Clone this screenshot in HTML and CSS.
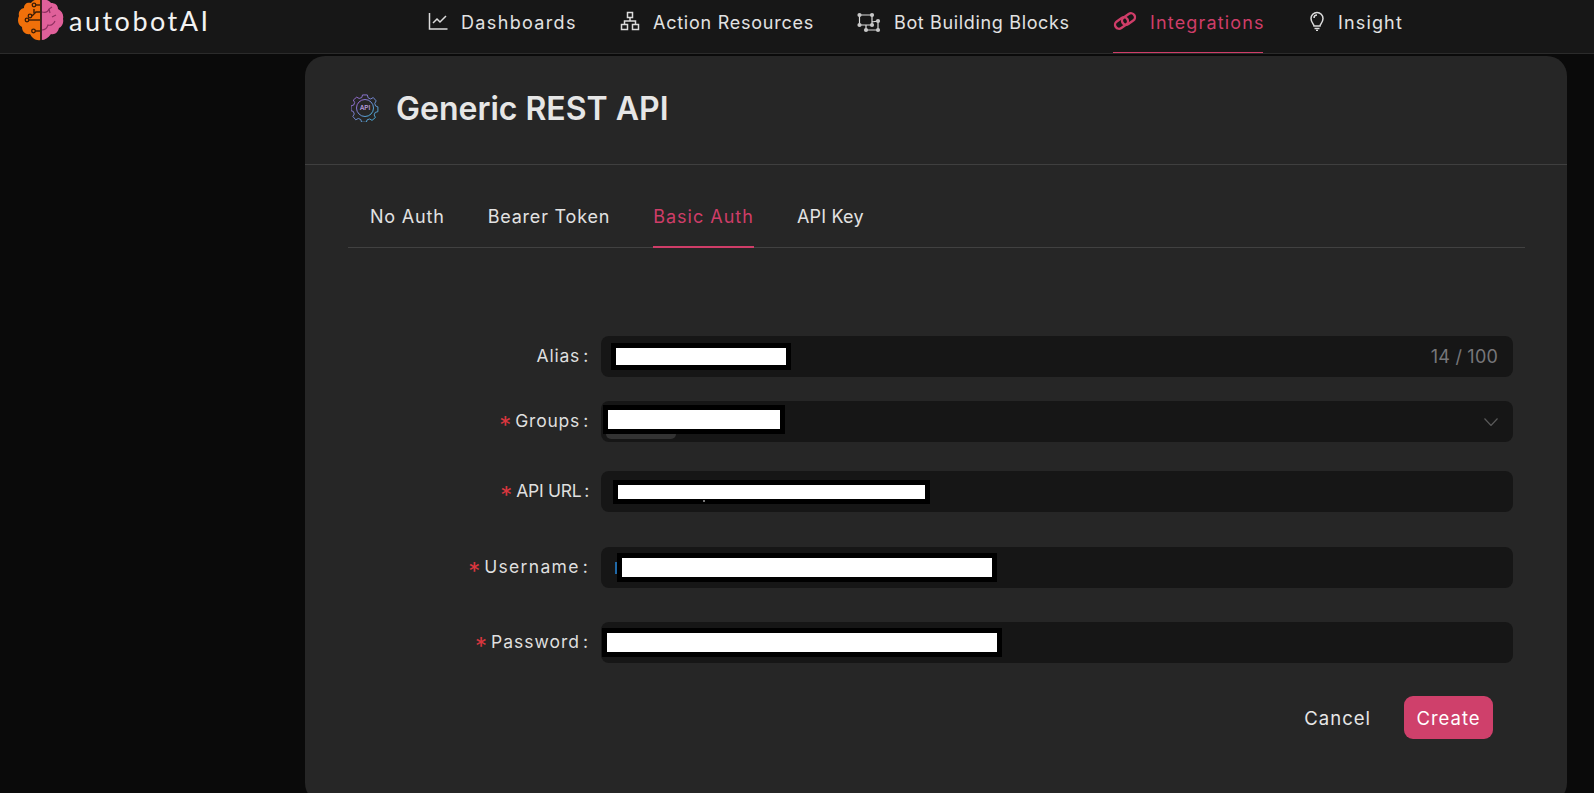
FILE: index.html
```html
<!DOCTYPE html>
<html lang="en">
<head>
    <meta charset="UTF-8">
    <meta name="viewport" content="width=device-width, initial-scale=1.0">
    <title>Generic REST API</title>
    <link rel="stylesheet" href="styles.css">
</head>
<body>
    <header class="topbar">
        <div class="brand">
            <svg class="brand-mark" viewBox="0 0 46 41" width="46" height="41">
                <path d="M22.500 0C18 -1 15 0 13 3C9 2 6 4 6 8C2 9 0 12 1 16C-1 20 0 25 4 27C4 32 8 35 12 34C14 38 18 41 22.500 40Z" fill="#f0700a"/>
                <path d="M23.500 0C27 -1 31 0 33 3C37 3 40 5 40 9C44 11 46 15 45 19C46 23 44 27 41 28C40 32 37 35 33 34C30 38 27 40 23.500 40Z" fill="#e0609a"/>
                <g fill="none" stroke="#3a1c06" stroke-width="1.400">
                    <path d="M22 5h-5"/>
                    <path d="M22 12h-4l-4 4"/>
                    <path d="M22 20H11"/>
                    <path d="M22 31h-5"/>
                    <path d="M16 13v-4"/>
                </g>
                <g fill="#f0700a" stroke="#3a1c06" stroke-width="1.300">
                    <circle cx="16" cy="5" r="1.800"/>
                    <circle cx="12" cy="16" r="1.800"/>
                    <circle cx="9" cy="20" r="1.800"/>
                    <circle cx="15.500" cy="31" r="1.800"/>
                </g>
                <g fill="none" stroke="#8e2f5f" stroke-width="1.100">
                    <path d="M24 12c4 1 6 0 7-3l3-2"/>
                    <path d="M31 9l1 4"/>
                    <path d="M24 30c3 0 5-2 6-5 3 1 6-1 7-4"/>
                    <path d="M38 15l-4 2"/>
                </g>
                <path d="M23 0V40" stroke="#17120f" stroke-width="1.200"/>
            </svg>
            <span class="brand-name">autobotAI</span>
        </div>
        <nav class="nav">
            <a class="nav-item nav-dash">
                <svg class="nav-icon" viewBox="0 0 20 20" width="20" height="20"><path d="M1.500 2v16h18M5 12l4-4 3 3 6-6"/></svg>
                Dashboards
            </a>
            <a class="nav-item nav-action">
                <svg class="nav-icon" viewBox="0 0 20 20" width="20" height="20"><path d="M7.500 1.500h5v5h-5zM1.500 13.500h6v5h-6zM12.500 13.500h6v5h-6zM10 6.500V10M4.500 13.500V10h11v3.500"/></svg>
                Action Resources
            </a>
            <a class="nav-item nav-bot">
                <svg class="nav-icon nav-icon-thin" viewBox="0 0 24 22" width="24" height="22"><path d="M2.500 4H15V14H2.500ZM15 11l6-1V19H9V14"/><g class="nav-dots"><circle cx="2.500" cy="4" r="2.100"/><circle cx="15" cy="4" r="2.100"/><circle cx="2.500" cy="14" r="2.100"/><circle cx="15" cy="14" r="2.100"/><circle cx="21" cy="10" r="2.100"/><circle cx="21" cy="19" r="2.100"/><circle cx="9" cy="19" r="2.100"/></g></svg>
                Bot Building Blocks
            </a>
            <a class="nav-item nav-integrations active">
                <svg class="nav-icon nav-icon-bold" viewBox="0 0 24 20" width="24" height="20"><rect x="1.500" y="8" width="14" height="8" rx="4" transform="rotate(-35 8.500 12)"/><rect x="8.500" y="4" width="14" height="8" rx="4" transform="rotate(-35 15.500 8)"/></svg>
                Integrations
            </a>
            <a class="nav-item nav-insight">
                <svg class="nav-icon" viewBox="0 0 16 20" width="16" height="20"><path d="M5 15c0-2-3-3.500-3-7.500a6 6 0 0 1 12 0c0 4-3 5.500-3 7.500zM5.500 17.500h5M7 19.500h2M5 7a3 3 0 0 1 3-3"/></svg>
                Insight
            </a>
        </nav>
    </header>

    <main class="page">
        <section class="panel">
            <div class="panel-head">
                <svg class="api-icon" viewBox="0 0 28 28" width="28" height="28">
                    <defs>
                        <linearGradient id="apiGrad" x1="0" y1="0" x2="1" y2="1">
                            <stop offset="0" stop-color="#a45fd0"/>
                            <stop offset="1" stop-color="#3fb6d8"/>
                        </linearGradient>
                    </defs>
                    <path d="M11.500 1.500h5l.8 3 2.700 1.200 2.700-1.500 3 3.500-1.500 2.600.9 2.700 2.400.9v5l-2.800.8-1.100 2.600 1.300 2.700-3.500 3-2.500-1.500-2.700 1-.7 2.400h-5l-.8-2.800-2.600-1.100-2.700 1.400-3-3.500 1.500-2.500-1-2.700-2.400-.8v-5l2.800-.9 1-2.600-1.400-2.600 3.500-3 2.600 1.400 2.700-1z" fill="none" stroke="url(#apiGrad)" stroke-width="1" transform="translate(.5 -.5) scale(.96)"/>
                    <circle cx="14" cy="14" r="8.500" fill="none" stroke="url(#apiGrad)" stroke-width="1"/>
                    <text x="14" y="16.200" class="api-icon-text">API</text>
                </svg>
                <h1 class="panel-title">Generic REST API</h1>
            </div>

            <div class="panel-body">
                <div class="tabs">
                    <a class="tab">No Auth</a>
                    <a class="tab">Bearer Token</a>
                    <a class="tab active">Basic Auth</a>
                    <a class="tab tab-key">API Key</a>
                </div>

                <form class="form">
                    <div class="row row-alias">
                        <label class="label">Alias<span class="colon">:</span></label>
                        <div class="field">
                            <span class="redact redact-alias"></span>
                            <span class="counter">14 / 100</span>
                        </div>
                    </div>
                    <div class="row row-groups">
                        <label class="label"><span class="req">*</span>Groups<span class="colon">:</span></label>
                        <div class="field">
                            <span class="tag-peek"></span>
                            <span class="redact redact-groups"></span>
                            <svg class="chevron" viewBox="0 0 14 8" width="14" height="8"><path d="M.5.5 7 7.500 13.500.5"/></svg>
                        </div>
                    </div>
                    <div class="row row-url">
                        <label class="label"><span class="req">*</span>API URL<span class="colon">:</span></label>
                        <div class="field">
                            <span class="redact redact-url"></span>
                            <span class="ink-peek"></span>
                        </div>
                    </div>
                    <div class="row row-user">
                        <label class="label"><span class="req">*</span>Username<span class="colon">:</span></label>
                        <div class="field">
                            <span class="caret"></span>
                            <span class="redact redact-user"></span>
                        </div>
                    </div>
                    <div class="row row-pass">
                        <label class="label"><span class="req">*</span>Password<span class="colon">:</span></label>
                        <div class="field">
                            <span class="redact redact-pass"></span>
                        </div>
                    </div>
                    <div class="actions">
                        <button type="button" class="btn btn-cancel">Cancel</button>
                        <button type="button" class="btn btn-create">Create</button>
                    </div>
                </form>
            </div>
        </section>
    </main>
</body>
</html>
```
FILE: styles.css
```css
* {
    box-sizing: border-box;
}
html, body {
    height: 793px;
    overflow: hidden;
}
body {
    margin: 0;
    background: #0a0a0a;
    color: #e6e6e6;
    font-family: Inter, "Noto Sans", sans-serif;
    font-size: 17px;
}

/* top bar */
.topbar {
    display: flex;
    height: 54px;
    background: #171717;
    border-bottom: 1px solid #2b2b2b;
}
.brand {
    display: flex;
    align-items: flex-start;
    padding-left: 18px;
    width: 428px;
}
.brand-mark {
    flex: none;
}
.brand-name {
    margin-left: 5px;
    margin-top: 5px;
    font-family: Lato, sans-serif;
    font-size: 27px;
    line-height: 32px;
    letter-spacing: 2.500px;
    color: #f2f2f2;
}
.nav {
    display: flex;
}
.nav-item {
    display: flex;
    align-items: flex-start;
    height: 54px;
    padding-top: 11px;
    font-size: 18px;
    line-height: 24px;
    letter-spacing: .65px;
    color: #e2e2e2;
    white-space: nowrap;
}
.nav-icon {
    flex: none;
    margin-right: 13px;
    fill: none;
    stroke: #dcdcdc;
    stroke-width: 1.500;
}
.nav-icon-thin {
    stroke-width: 1.200;
}
.nav-icon-bold {
    stroke: #cf3d68;
    stroke-width: 2.400;
}
.nav-dots circle {
    fill: #c8c8c8;
    stroke: none;
}
.nav-dash { width: 192px; letter-spacing: 1.350px; }
.nav-action { width: 237px; letter-spacing: .75px; }
.nav-bot { width: 256px; }
.nav-integrations { width: 196px; letter-spacing: 1.150px; }
.nav-insight { letter-spacing: 1.150px; }
.nav-item.active {
    color: #cf3d68;
    position: relative;
}
.nav-item.active::after {
    content: "";
    position: absolute;
    left: 0;
    width: 150px;
    bottom: 1px;
    height: 1px;
    background: #cf3d68;
}

/* panel */
.page {
    padding: 2px 27px 0 305px;
}
.panel {
    height: 747px;
    background: #262626;
    border-radius: 20px;
}
.panel-head {
    display: flex;
    align-items: center;
    height: 109px;
    padding: 0 46px 4px;
    border-bottom: 1px solid #3f3f3f;
}
.api-icon {
    flex: none;
    margin-right: 17px;
}
.api-icon-text {
    font-size: 6.500px;
    font-weight: 600;
    fill: #b59ad8;
    text-anchor: middle;
}
.panel-title {
    margin: 0;
    font-size: 32px;
    font-weight: 600;
    color: #e6e6e6;
}
.panel-body {
    padding: 0 42px 0 43px;
}

/* tabs */
.tabs {
    display: flex;
    gap: 43px;
    height: 83px;
    padding: 39px 0 0 22px;
    border-bottom: 1px solid #414141;
}
.tab {
    height: 44px;
    font-size: 18px;
    line-height: 26px;
    letter-spacing: .8px;
    color: #e2e2e2;
}
.tab-key {
    letter-spacing: .2px;
}
.tab.active {
    letter-spacing: 1px;
    color: #cf3d68;
    border-bottom: 2px solid #cf3d68;
}

/* form */
.form {
    padding: 88px 12px 0 0;
}
.row {
    display: flex;
    align-items: center;
}
.row-groups { margin-top: 24px; }
.row-url { margin-top: 29px; }
.row-user { margin-top: 35px; }
.row-pass { margin-top: 34px; }
.label {
    width: 241px;
    padding-bottom: 2px;
    text-align: right;
    font-size: 17.500px;
    letter-spacing: .8px;
    color: #dfdfdf;
    white-space: nowrap;
}
.row-url .label {
    letter-spacing: -.3px;
}
.row-user .label {
    letter-spacing: 1.300px;
}
.row-pass .label {
    letter-spacing: 1px;
}
.colon {
    margin-left: 3px;
}
.req {
    display: inline-block;
    margin-right: 4px;
    font-size: 24px;
    line-height: 0;
    vertical-align: -7px;
    letter-spacing: 0;
    color: #d9363e;
}
.field {
    position: relative;
    display: flex;
    align-items: center;
    flex: 1;
    height: 41px;
    margin-left: 12px;
    background: #161616;
    border-radius: 8px;
}
.redact {
    display: block;
    background: #fff;
    border: 5px solid #000;
}
.redact-alias { width: 180px; height: 27px; margin-left: 10px; }
.redact-groups { width: 182px; height: 29px; margin: -4px 0 0 2px; position: relative; }
.redact-url { width: 317px; height: 24px; margin: 0 0 0 12px; }
.redact-user { width: 380px; height: 29px; }
.redact-pass { width: 400px; height: 29px; margin: 0 0 0 1px; }
.tag-peek {
    position: absolute;
    left: 5px;
    bottom: 3px;
    width: 70px;
    height: 10px;
    background: #333;
    border-radius: 5px;
}
.ink-peek {
    position: absolute;
    left: 102px;
    bottom: 10px;
    width: 2px;
    height: 2px;
    background: #777;
}
.caret {
    width: 2px;
    height: 12px;
    margin-left: 14px;
    background: #2069a8;
}
.counter {
    margin-left: auto;
    padding-right: 15px;
    font-size: 18px;
    letter-spacing: .2px;
    color: #77777a;
}
.chevron {
    margin-left: auto;
    margin-right: 15px;
    fill: none;
    stroke: #5a5a5a;
    stroke-width: 1.200;
}

/* buttons */
.actions {
    display: flex;
    justify-content: flex-end;
    align-items: center;
    gap: 33px;
    margin-top: 33px;
    padding-right: 20px;
}
.btn {
    border: 0;
    background: none;
    padding: 0;
    font-family: inherit;
    font-size: 18.500px;
    letter-spacing: 1px;
    color: #e6e6e6;
}
.btn-create {
    width: 89px;
    height: 43px;
    background: #cf406b;
    border-radius: 9px;
    color: #fff;
}
```
